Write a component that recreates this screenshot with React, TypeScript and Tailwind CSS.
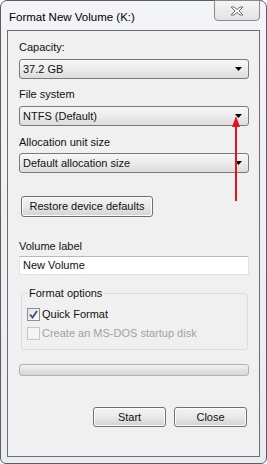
const font = "font-['Liberation_Sans',Arial,sans-serif]";

const Caret = () => (
  <svg width="8" height="5" viewBox="0 0 8 5" className="shrink-0">
    <path d="M0 0 H7 L3.5 4 Z" fill="#000" />
  </svg>
);

const Combo = ({ value }: { value: string }) => (
  <div className="flex h-[20px] items-center justify-between rounded-[3px] border border-[#7a7a7a] bg-gradient-to-b from-[#f7f7f7] via-[#ececec] to-[#dcdcdc] pl-[3px] pr-[5px] text-[#111]">
    <span>{value}</span>
    <Caret />
  </div>
);

const WinButton = ({ label, className }: { label: string; className: string }) => (
  <div
    className={`flex items-center justify-center rounded-[3px] border border-[#707070] bg-gradient-to-b from-[#f4f4f4] via-[#e8e8e8] to-[#d2d2d2] text-[#111] shadow-[inset_0_0_0_1px_#fcfcfc] ${className}`}
  >
    {label}
  </div>
);

const Check = ({ checked, disabled, label }: { checked?: boolean; disabled?: boolean; label: string }) => (
  <div className="flex h-[13px] items-center gap-[2px]">
    <div
      className={`flex h-[13px] w-[13px] items-center justify-center border ${
        disabled ? "border-[#c6c6c6] bg-[#f4f4f4]" : "border-[#8e8f8f] bg-gradient-to-br from-[#e4e4e4] to-[#fbfbfb]"
      }`}
    >
      {checked && (
        <svg width="9" height="9" viewBox="0 0 9 9">
          <path d="M1 4.5 L3.5 7.5 L8 1" fill="none" stroke="#3d4f86" strokeWidth="1.8" />
        </svg>
      )}
    </div>
    <span className={disabled ? "text-[#a2a2a2]" : "text-[#111]"}>{label}</span>
  </div>
);

export default function App() {
  return (
    <div className={`relative h-[464px] w-[267px] bg-white text-[11px] leading-[13px] ${font}`}>
      <div className="flex h-full flex-col rounded-t-[7px] rounded-b-[6px] border border-[#5c5c5c] bg-gradient-to-b from-[#f2f4f7] to-[#e9edf1] px-[6px] pb-[6px]">
        {/* Title bar */}
        <div className="flex h-[29px] items-start justify-between">
          <span className="pl-[2px] pt-[10px] text-[11.5px] text-black">Format New Volume (K:)</span>
          <div className="-mt-px flex h-[21px] w-[46px] items-center justify-center rounded-b-[4px] border border-[#8c8c8c] bg-gradient-to-b from-[#f4f4f4] to-[#e3e3e3]">
            <svg width="14" height="10" viewBox="0 0 14 10">
              <path
                d="M1 1 H4 L7 3.5 L10 1 H13 L9 5 L13 9 H10 L7 6.5 L4 9 H1 L5 5 Z"
                fill="#fdfdfd"
                stroke="#6e6e6e"
                strokeWidth="1"
                strokeLinejoin="round"
              />
            </svg>
          </div>
        </div>

        {/* Client area */}
        <div className="flex flex-1 flex-col border border-[#6e6e6e] bg-[#f0f0f0] pl-[11px] pr-[10px] pt-[10px]">
          <div className="h-[13px] text-[#111]">Capacity:</div>
          <div className="mt-[5px]">
            <Combo value="37.2 GB" />
          </div>

          <div className="mt-[9px] h-[13px] text-[#111]">File system</div>
          <div className="mt-[5px]">
            <Combo value="NTFS (Default)" />
          </div>

          <div className="mt-[10px] h-[13px] text-[#111]">Allocation unit size</div>
          <div className="mt-[4px]">
            <Combo value="Default allocation size" />
          </div>

          <WinButton label="Restore device defaults" className="ml-[2px] mt-[23px] h-[21px] w-[132px]" />

          <div className="mt-[23px] h-[13px] text-[#111]">Volume label</div>
          <div className="mt-[3px] flex h-[19px] items-center border border-[#dfe3e8] border-t-[#b5b8bd] bg-white pl-[3px] text-[#111]">
            New Volume
          </div>

          {/* Format options */}
          <div className="relative ml-[2px] mr-[1px] mt-[18px] flex h-[57px] flex-col gap-[6px] rounded-[3px] border border-[#d5dfe5] pl-[5px] pt-[14px]">
            <span className="absolute -top-[7px] left-[5px] bg-[#f0f0f0] px-[2px] text-[#111]">Format options</span>
            <Check checked label="Quick Format" />
            <Check disabled label="Create an MS-DOS startup disk" />
          </div>

          <div className="mt-[14px] h-[12px] rounded-[3px] border border-[#b2b2b2] bg-gradient-to-b from-[#f3f3f3] via-[#e2e2e2] to-[#d6d6d6]" />

          <div className="mt-[31px] flex justify-end gap-[8px] pr-[2px]">
            <WinButton label="Start" className="h-[20px] w-[73px]" />
            <WinButton label="Close" className="h-[20px] w-[73px]" />
          </div>
        </div>
      </div>

      {/* Red annotation arrow */}
      <svg className="absolute left-[230px] top-[115px]" width="12" height="88" viewBox="0 0 12 88">
        <path d="M6 8 V86" stroke="#e3131b" strokeWidth="2" />
        <path d="M6 1 L2 12 L10 12 Z" fill="#e3131b" />
      </svg>
    </div>
  );
}
